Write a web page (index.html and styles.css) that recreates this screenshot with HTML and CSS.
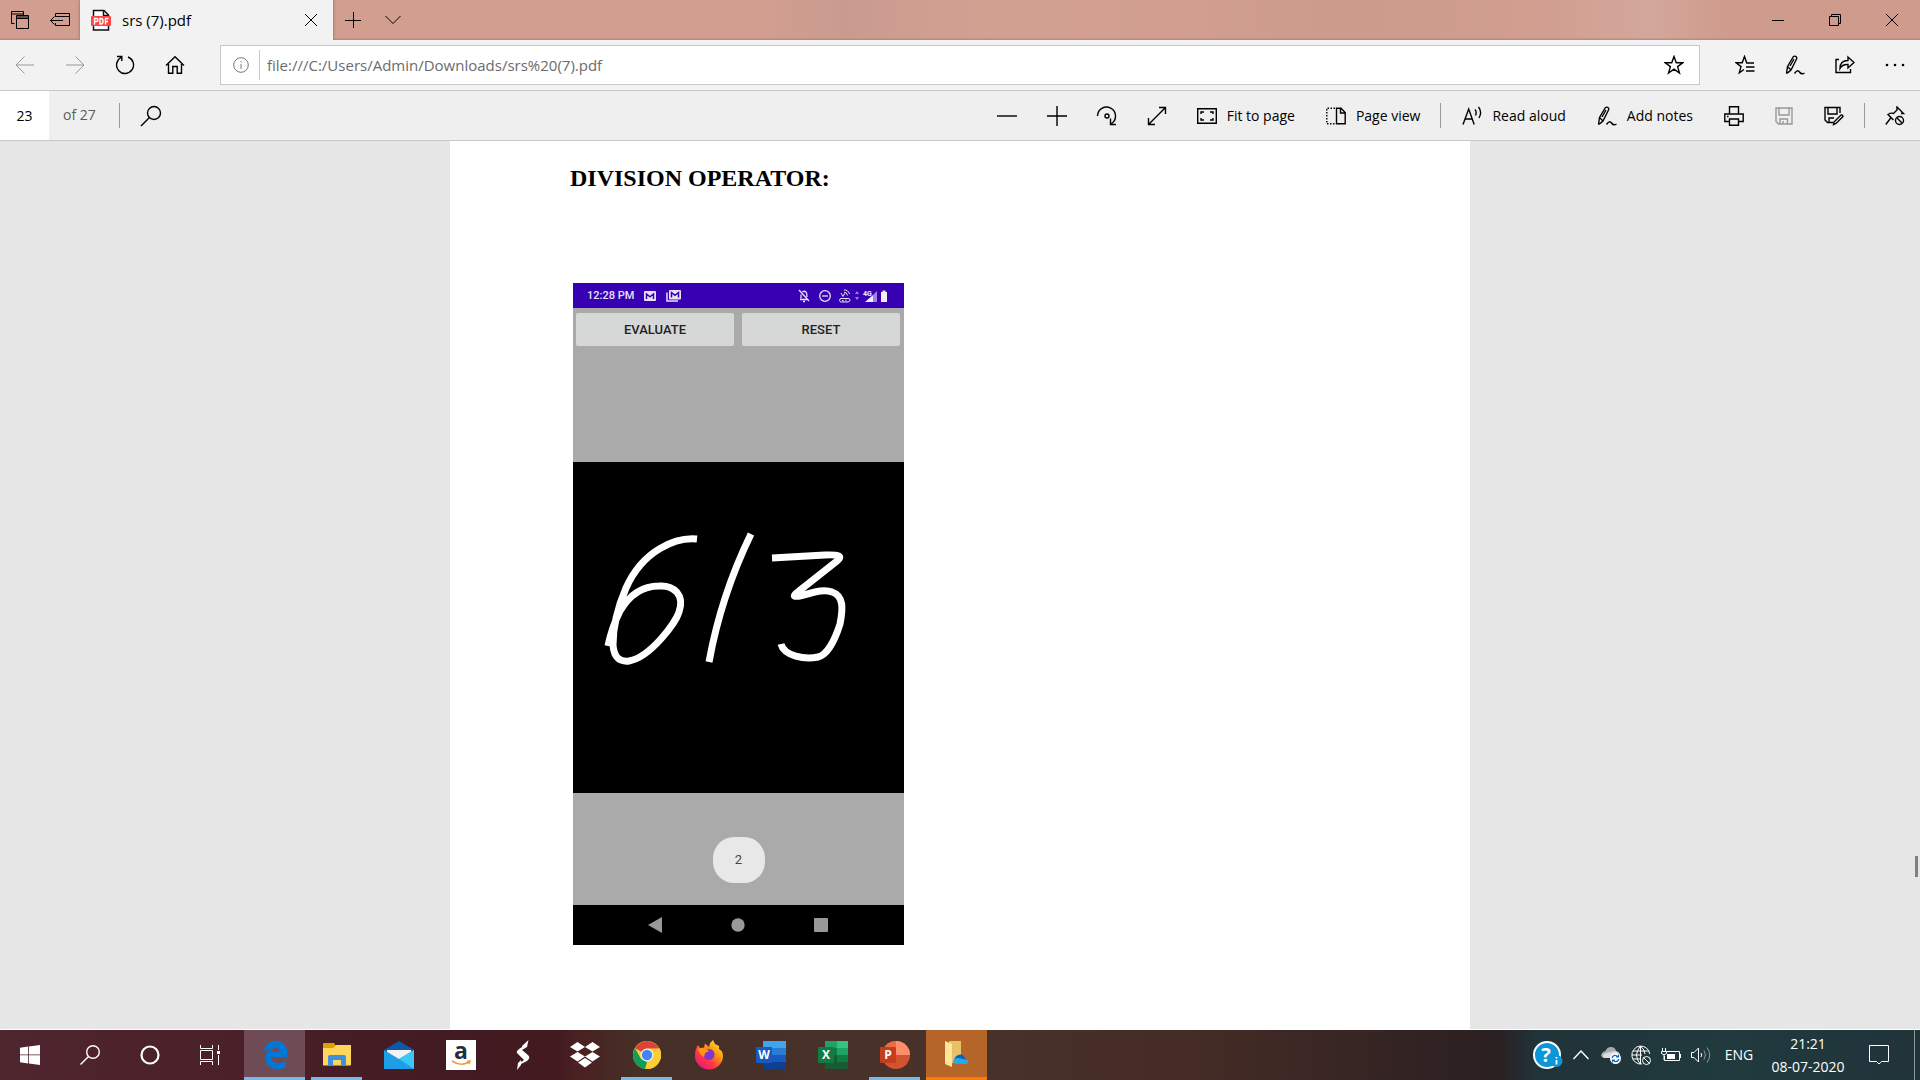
FILE: index.html
```html
<!DOCTYPE html>
<html lang="en">
<head>
<meta charset="utf-8">
<title>srs (7).pdf</title>
<link rel="stylesheet" href="styles.css">
</head>
<body>
<header class="titlebar">
  <button class="tb-btn" aria-label="Tabs set aside"><svg width="20" height="24" viewBox="0 0 20 24" class="ln"><path d="M4.500 15.500H1.500V3.500H13.500V7M1.500 6H13.500M6.500 7.500H18.500V20.500H6.500ZM6.500 10.500H18.500M6.500 9H18.500"/></svg></button>
  <button class="tb-btn" aria-label="Set tabs aside"><svg width="22" height="24" viewBox="0 0 22 24" class="ln"><path d="M6.500 9V5.500H20.500V17.500H6.500V15M6.500 8.500H20.500M14 12.500H1.500M5.500 8.500L1.500 12.500L5.500 16.500"/></svg></button>
  <div class="tab">
    <svg width="20" height="22" viewBox="0 0 20 22"><path d="M2.500 21V1.500H13L17.500 6V21Z" fill="#fff" stroke="#111" stroke-width="1.500"/><path d="M12.500 1V6.500H18" fill="none" stroke="#111" stroke-width="1.500"/><rect y="7" width="20" height="10" rx="1" fill="#f44"/><path d="M3.500 15.500V9.500H5.500Q7 9.500 7 11T5.500 12.500H3.500M9 9.500H10Q12 9.500 12 12.200T10 15H9ZM14.500 15.500V9.500H17.500M14.500 12.500H17" fill="none" stroke="#fff" stroke-width="1.400"/></svg>
    <span class="tab-title">srs (7).pdf</span>
    <button class="tab-close" aria-label="Close tab"><svg width="14" height="14" viewBox="0 0 14 14" class="ln"><path d="M1 1L13 13M13 1L1 13"/></svg></button>
  </div>
  <button class="tb-btn" aria-label="New tab"><svg width="16" height="16" viewBox="0 0 16 16" class="ln"><path d="M8.500 0V16M0 8.500H16"/></svg></button>
  <button class="tb-btn" aria-label="Tab previews"><svg width="16" height="10" viewBox="0 0 16 10" class="ln"><path d="M.5 1L8 8.500L15.500 1"/></svg></button>
  <div class="spacer"></div>
  <button class="win-btn" aria-label="Minimize"><svg width="12" height="12" viewBox="0 0 12 12" class="ln"><path d="M0 6.500H12"/></svg></button>
  <button class="win-btn" aria-label="Restore"><svg width="12" height="12" viewBox="0 0 12 12" class="ln"><path d="M.5 2.500H9.500V11.500H.5ZM2.500 2.500V.5H11.500V9.500H9.500"/></svg></button>
  <button class="win-btn" aria-label="Close"><svg width="12" height="12" viewBox="0 0 12 12" class="ln"><path d="M0 0L12 12M12 0L0 12"/></svg></button>
</header>

<nav class="navbar">
  <button class="icon-btn" aria-label="Back" disabled><svg width="20" height="18" viewBox="0 0 20 18" class="ln dim"><path d="M19 9H1M9.500 .5L1 9L9.500 17.500"/></svg></button>
  <button class="icon-btn" aria-label="Forward" disabled><svg width="20" height="18" viewBox="0 0 20 18" class="ln dim"><path d="M1 9H19M10.500 .5L19 9L10.500 17.500"/></svg></button>
  <button class="icon-btn" aria-label="Refresh"><svg width="20" height="20" viewBox="0 0 20 20" class="ln md"><path d="M13 2A8.500 8.500 0 1 1 6 2.500M2 1.500H6.800V6"/></svg></button>
  <button class="icon-btn" aria-label="Home"><svg width="20" height="20" viewBox="0 0 20 20" class="ln md"><path d="M1 10.500L10 1.800L19 10.500M3.500 9V18.200H7.800V11.500H12.200V18.200H16.500V9"/></svg></button>
  <div class="address">
    <svg width="16" height="16" viewBox="0 0 16 16" class="ln grey"><circle cx="8" cy="8" r="7.300"/><path d="M8 6.800V12M8 4V5.300"/></svg>
    <input class="url" aria-label="Address" value="file:///C:/Users/Admin/Downloads/srs%20(7).pdf">
    <button class="star" aria-label="Add to favorites"><svg width="20" height="20" viewBox="0 0 20 20" class="ln md"><path d="M10 1.500L12.300 7.800H18.800L13.600 11.600L15.500 18L10 14.200L4.500 18L6.400 11.600L1.200 7.800H7.700Z"/></svg></button>
  </div>
  <button class="icon-btn" aria-label="Favorites"><svg width="20" height="20" viewBox="0 0 20 20" class="ln md"><path d="M19 8H11.800L9.500 1.500L7.200 7.800H1.200L6 11.600L4.300 17.800L9 14.500M11 12H19.500M11 16H19.500"/></svg></button>
  <button class="icon-btn" aria-label="Add notes to page"><svg width="20" height="20" viewBox="0 0 20 20" class="ln md"><path d="M1.500 18.500L2.500 11.500L8.500 1.500Q10 .5 11.500 2L11.800 3.500L6 15Q4 17 1.500 18.500M2.500 11.500L5.500 14.500M9 4L5 11M9.500 18.500Q12.500 14 14.500 17T19.500 18"/></svg></button>
  <button class="icon-btn" aria-label="Share"><svg width="20" height="20" viewBox="0 0 20 20" class="ln md"><path d="M4 4.500H1V17.500H15.500V14M5 13.500Q5 5.500 13 5.500V2L19 7.500L13 13V9.500Q7.500 9 5 13.500Z"/></svg></button>
  <button class="icon-btn" aria-label="Settings and more"><svg width="20" height="4" viewBox="0 0 20 4"><circle cx="2" cy="2" r="1.300"/><circle cx="10" cy="2" r="1.300"/><circle cx="18" cy="2" r="1.300"/></svg></button>
</nav>

<div class="toolbar">
  <input class="page-no" id="page" value="23" aria-label="Page number">
  <label class="page-of" for="page">of 27</label>
  <span class="sep"></span>
  <button class="icon-btn find" aria-label="Find"><svg width="22" height="22" viewBox="0 0 22 22" class="ln md"><circle cx="14" cy="8" r="6.500"/><path d="M9.500 12.500L1 21"/></svg></button>
  <div class="spacer"></div>
  <button class="icon-btn" aria-label="Zoom out"><svg width="20" height="20" viewBox="0 0 20 20" class="ln md"><path d="M0 10H20"/></svg></button>
  <button class="icon-btn" aria-label="Zoom in"><svg width="20" height="20" viewBox="0 0 20 20" class="ln md"><path d="M0 10H20M10 0V20"/></svg></button>
  <button class="icon-btn" aria-label="Rotate"><svg width="22" height="22" viewBox="0 0 22 22" class="ln md"><path d="M1.500 11A9 9 0 1 1 15.500 18.500M14.500 13.500V19.500H20"/><circle cx="11" cy="11" r="2"/></svg></button>
  <button class="icon-btn" aria-label="Full screen"><svg width="20" height="20" viewBox="0 0 20 20" class="ln md"><path d="M1.500 18.500L18.500 1.500M12 1.500H18.500V8M1.500 12V18.500H8"/></svg></button>
  <button class="text-btn"><svg width="20" height="16" viewBox="0 0 20 16" class="ln md"><path d="M.7 .7H19.300V15.300H.7ZM4 6V4H7M13 4H16V6M16 10V12H13M7 12H4V10"/></svg>Fit to page</button>
  <button class="text-btn view"><svg width="20" height="18" viewBox="0 0 20 18" class="ln md"><path d="M10.500 1.200H15L19.200 5.500V16.800H10.500ZM14.500 1.200V6H19"/><path stroke-dasharray="1.500 1.500" d="M9 1.200H.8V16.800H9"/></svg>Page view</button>
  <span class="sep"></span>
  <button class="text-btn wide"><svg width="20" height="20" viewBox="0 0 20 20" class="ln md"><path d="M1 18.500L6.700 3L12.200 18.500M3 13H10.200M13 3.500Q15 6 13.500 9.500M16.500 1Q20.500 6 17 12"/></svg>Read aloud</button>
  <button class="text-btn"><svg width="20" height="20" viewBox="0 0 20 20" class="ln md"><path d="M1.500 18.500L2.500 11.500L8.500 1.500Q10 .5 11.500 2L11.800 3.500L6 15Q4 17 1.500 18.500M2.500 11.500L5.500 14.500M9 4L5 11M9.500 18.500Q12.500 14 14.500 17T19.500 18"/></svg>Add notes</button>
  <button class="icon-btn" aria-label="Print"><svg width="20" height="20" viewBox="0 0 20 20" class="ln md"><path d="M5.500 8V.8H14.500V8M5 15.500H.8V8H19.200V15.500H15M5.500 13H14.500V19.200H5.500ZM3 10.500H4.500"/></svg></button>
  <button class="icon-btn" aria-label="Save" disabled><svg width="18" height="18" viewBox="0 0 18 18" class="ln dim md"><path d="M1 1H17V17H3.500L1 14.500ZM4 1V8H14V1M5 17V12H12.500V17M8 14V17"/></svg></button>
  <button class="icon-btn" aria-label="Save as"><svg width="20" height="20" viewBox="0 0 20 20" class="ln md"><path d="M9 16.500H3.500L1 14V1.500H16V7M4 1.500V8H13V1.500M5 16.500V12H10M10 16L17 9Q18.500 8.500 19 10.500L12 17.500L9.500 18.500Z"/></svg></button>
  <span class="sep end"></span>
  <button class="icon-btn" aria-label="Unpin toolbar"><svg width="20" height="20" viewBox="0 0 20 20" class="ln md"><path d="M8.500 14L3 8.500Q6 6.500 8.500 7.500L12 4V1L18.500 7.500H16M5.700 12L.8 18.500"/><circle cx="14.500" cy="14.500" r="4"/><path d="M12 12L17 17"/></svg></button>
</div>

<main class="viewer">
  <article class="page">
    <h1 class="heading">DIVISION OPERATOR:</h1>
    <section class="phone">
      <div class="status">
        <span>12:28 PM</span>
        <svg width="12" height="10" viewBox="0 0 12 10"><rect width="12" height="10" rx="1" fill="#e8e0f8"/><path d="M2.500 8V3L6 5.800L9.500 3V8" fill="none" stroke="#3700b3" stroke-width="1.500"/></svg>
        <svg width="15" height="12" viewBox="0 0 15 12"><path d="M1 2.500V11H12" fill="none" stroke="#e8e0f8" stroke-width="1.500"/><rect x="3" width="12" height="9.500" rx="1" fill="#e8e0f8"/><path d="M5.500 7.500V2.500L9 5.300L12.500 2.500V7.500" fill="none" stroke="#3700b3" stroke-width="1.500"/></svg>
        <span class="spacer"></span>
        <svg width="90" height="16" viewBox="0 0 90 16"><g fill="none" stroke="#e8e0f8" stroke-width="1.300"><path d="M1 2L11 13M2 11.500H9.500M3 10.500V6.500M4.500 4Q6 2.500 8 4Q9 5 9 9M5 13.500H7"/><circle cx="27" cy="8" r="5.300"/><path d="M24 8H30"/><path stroke-width="1" d="M42.500 10.500H50Q52 10.500 52 12T50 14H43.500Q41.500 14 41.500 12.300T43.500 10.500M44.500 12V13H46M48 11.500V13.500M43 5L45 8.500L47 5M46 2Q50 1.500 51.500 6M46 4Q49 4 49.500 7.500"/></g><path fill="#9f86dd" d="M57 6L59 3L61 6ZM57 9H61L59 12ZM75 7L79 3V14H75Z"/><path fill="#f2edfc" d="M67 14L75 7V14ZM83 4H84.500V2.500H87.500V4H89V14H83Z"/><text x="65" y="8" class="net">4G</text></svg>
      </div>
      <div class="actions"><button class="act">EVALUATE</button><button class="act">RESET</button></div>
      <svg class="canvas" viewBox="0 0 331 331" role="img" aria-label="Handwritten 6 / 3"><g fill="none" stroke="#fff" stroke-width="7"><path d="M124 77C103 75 70 88 53 126C44 147 40 168 40 183C41 196 47 200 56 199C78 195 103 160 106 150C112 133 101 123 86 124C70 124 57 132 47 149C40 163 37 174 35 184"/><path d="M178 72C160 109 144 156 136 200"/><path d="M199 96L252 93Q273 92 264 99L226 129Q216 136 227 134C245 129 252 127 259 130C271 134 270 147 267 162C262 178 254 193 245 195C232 198 211 194 208 182" stroke-linejoin="round"/></g></svg>
      <div class="result"><output class="toast">2</output></div>
      <div class="keys"><svg width="14" height="16" viewBox="0 0 14 16"><path d="M0 8L14 0V16Z"/></svg><svg width="14" height="14" viewBox="0 0 14 14"><circle cx="7" cy="7" r="6.700"/></svg><svg width="14" height="14" viewBox="0 0 14 14"><rect width="14" height="14" rx="1"/></svg></div>
    </section>
  </article>
  <span class="thumb"></span>
</main>

<footer class="taskbar">
  <button class="sys" aria-label="Start"><svg width="20" height="20" viewBox="0 0 20 20" fill="#fff"><path d="M0 2.800L8.200 1.500V9.500H0ZM9 1.400L20 0V9.500H9ZM0 10.300H8.200V18.500L0 17.300ZM9 10.300H20V20L9 18.600Z"/></svg></button>
  <button class="sys" aria-label="Search"><svg width="20" height="20" viewBox="0 0 20 20" class="ln wh md"><circle cx="13" cy="7" r="6.300"/><path d="M8.500 11.500L.5 19.500"/></svg></button>
  <button class="sys" aria-label="Cortana"><svg width="20" height="20" viewBox="0 0 20 20"><circle cx="10" cy="10" r="8.500" fill="none" stroke="#fff" stroke-width="2.200"/></svg></button>
  <button class="sys" aria-label="Task view"><svg width="20" height="20" viewBox="0 0 20 20" class="ln wh"><path d="M.5 0V3.500H12.500V0M.5 5.500H12.500V14.500H.5ZM.5 20V16.500H12.500V20M18.500 0V5M18.500 10V20"/><path d="M17 6H20V9H17Z" fill="#fff" stroke="none"/></svg></button>
  <div class="apps">
    <button class="app active run" aria-label="Microsoft Edge"><svg width="26" height="28" viewBox="0 0 26 28"><path fill="#0078d7" d="M1 12C3 4 8 0 14 0C21 0 25.500 5 25.500 12V16H9C9.500 20 12 22 16.500 22C19.500 22 22 21 24 20V26C21.500 27.500 18.500 28 15.500 28C8 28 3.500 23.500 3.500 17C3.500 12.500 6 9 10 7.500C5.500 8 2.500 10 1 12ZM9 11H17.500C17.500 7.500 15.500 6.500 13.500 6.500C11 6.500 9.500 8 9 11Z"/></svg></button>
    <button class="app run" aria-label="File Explorer"><svg width="28" height="24" viewBox="0 0 28 24"><path fill="#dfa100" d="M0 1Q0 0 1 0H11L13 3H27V8H0Z"/><path fill="#ffd65c" d="M0 5H10L13 2H28V21.500Q28 22.500 27 22.500H0Z"/><path fill="#3b91dd" d="M5 23V14Q5 12 7 12H21Q23 12 23 14V23H18V17H10V23Z"/></svg></button>
    <button class="app" aria-label="Mail"><svg width="30" height="28" viewBox="0 0 30 28"><path fill="#0c59a4" d="M0 9L15 0L30 9V18H0Z"/><path fill="#f3f3f3" d="M3 9H27V19H3Z"/><path fill="#1d9ee6" d="M0 9L15 18L30 9V28H0Z"/><path fill="#3bc8f5" d="M30 9V28L15 18Z"/></svg></button>
    <button class="app" aria-label="Amazon"><svg width="30" height="30" viewBox="0 0 30 30"><path fill="#fff" d="M0 0H30V30H0Z"/><text x="15" y="19" class="amz">a</text><path d="M6 21Q15 27 23 22M21 21.500L24 21L23 24" fill="none" stroke="#f79b34" stroke-width="1.600"/></svg></button>
    <button class="app" aria-label="Streamlabs"><svg width="14" height="30" viewBox="0 0 14 30" fill="#fff"><path d="M12.500 0L11 7L6 10V6ZM6 7L3 9Q-1 12 2 14L8 20L5 22V24L11 21Q15 18 12 15L6 10ZM5 20V25L1 30L2 23Z"/></svg></button>
    <button class="app" aria-label="Dropbox"><svg width="30" height="26" viewBox="0 0 30 26" fill="#fff"><path d="M7.500 0L15 5L7.500 9.500L0 5ZM22.500 0L30 5L22.500 9.500L15 5ZM7.500 10L15 14.500L7.500 19.500L0 14.500ZM22.500 10L30 14.500L22.500 19.500L15 14.500ZM15 16L22 20.500L15 25.500L8 20.500Z"/></svg></button>
    <button class="app run" aria-label="Google Chrome"><svg width="28" height="28" viewBox="0 0 28 28"><circle cx="14" cy="14" r="14" fill="#fc3"/><path fill="#db4437" d="M14 14L1.900 7A14 14 0 0 1 26.100 7Z"/><path fill="#0f9d58" d="M1.900 7L8 18L14 21L12 27.900A14 14 0 0 1 1.900 7Z"/><path fill="#fc3" d="M14 7.500H26.500A14 14 0 0 1 13.500 28L20 17Z"/><circle cx="14" cy="14" r="6.500" fill="#f1f1f1"/><circle cx="14" cy="14" r="5.200" fill="#4285f4"/></svg></button>
    <button class="app" aria-label="Firefox"><svg width="28" height="30" viewBox="0 0 28 30"><defs><linearGradient id="ff" x1="1" y1="0" x2=".2" y2="1"><stop offset="0" stop-color="#fff44f"/><stop offset=".4" stop-color="#ff980e"/><stop offset=".7" stop-color="#ff3647"/><stop offset="1" stop-color="#e31587"/></linearGradient></defs><path fill="url(#ff)" d="M3 5L5 8L9 7.500L10 3.500L14 7L15 3L18 0L20 4L24 6V9Q28 11 28 16A14 13.500 0 0 1 0 16Q0 9 3 5Z"/><circle cx="14" cy="14.500" r="5.500" fill="#8135d0"/><path fill="#ff980e" d="M3 9Q9 6 14 11L10 13L9 17Q4 14 3 9Z"/></svg></button>
    <button class="app" aria-label="Word"><svg width="30" height="28" viewBox="0 0 30 28"><path fill="#41a5ee" d="M7 0H30V7H7Z"/><path fill="#2b7cd3" d="M7 7H30V14H7Z"/><path fill="#185abd" d="M7 14H30V21H7Z"/><path fill="#103f91" d="M7 21H30V28H7Z"/><rect y="6" width="16" height="16" rx="1" fill="#185abd"/><text x="8" y="18" class="off">W</text></svg></button>
    <button class="app" aria-label="Excel"><svg width="30" height="28" viewBox="0 0 30 28"><path fill="#21a366" d="M7 0H19V7H7Z"/><path fill="#33c481" d="M19 0H30V7H19Z"/><path fill="#107c41" d="M7 7H19V14H7ZM19 14H30V21H19Z"/><path fill="#21a366" d="M19 7H30V14H19Z"/><path fill="#185c37" d="M7 14H19V21H30V28H7Z"/><rect y="6" width="16" height="16" rx="1" fill="#107c41"/><text x="8" y="18" class="off">X</text></svg></button>
    <button class="app run" aria-label="PowerPoint"><svg width="30" height="28" viewBox="0 0 30 28"><circle cx="16" cy="14" r="14" fill="#d35230"/><path fill="#ed6c47" d="M16 14H2A14 14 0 0 1 16 0Z"/><path fill="#ff8f6b" d="M16 0A14 14 0 0 1 30 14H16Z"/><rect y="6" width="16" height="16" rx="1" fill="#c43e1c"/><text x="8" y="18" class="off">P</text></svg></button>
    <button class="app alert" aria-label="OneDrive folder"><svg width="24" height="26" viewBox="0 0 24 26"><path fill="#e8c165" d="M4 0H16V22H4Z"/><path fill="#ffe69c" d="M0 0L7 3V26L0 23Z"/><path fill="#0364b8" d="M9 20Q9 16 13 14Q18 12 20 17L22 20Z"/><path fill="#28a8ea" d="M8 20Q9 17 13 17L23 19Q25 22 21 23H11Q8 23 8 20Z"/></svg></button>
  </div>
  <div class="spacer"></div>
  <button class="help" aria-label="Help"><svg width="30" height="28" viewBox="0 0 30 28"><circle cx="14" cy="14" r="13" fill="#0a96d7" stroke="#fff" stroke-width="2"/><text x="13" y="21" class="q">?</text><circle cx="23.500" cy="20" r="6" fill="#0a96d7"/><path d="M23.500 19V23.500M23.500 16V17.500" stroke="#fff" stroke-width="1.800"/></svg></button>
  <div class="tray">
    <button class="tray-btn" aria-label="Show hidden icons"><svg width="16" height="10" viewBox="0 0 16 10" class="ln wh md"><path d="M.5 9L8 1L15.500 9"/></svg></button>
    <button class="tray-btn" aria-label="OneDrive"><svg width="20" height="18" viewBox="0 0 20 18"><path fill="#aaa" d="M3 12Q-1 11 .5 8T4.500 5Q6 1 10 1T15 5Q19 6 19 10T14 12Z"/><path fill="#ddd" d="M3 12Q0 9 5 7L14 5Q19 6 19 10L14 12Z"/><circle cx="14.500" cy="12.500" r="5.500" fill="#fff"/><path d="M11 12Q12 9 15 9.500L17.500 11M18 13Q17 16 14 15.500L11.500 14M17.500 8.500V11H15M11.500 16.500V14H14" fill="none" stroke="#1565c0" stroke-width="1.200"/></svg></button>
    <button class="tray-btn" aria-label="Network"><svg width="20" height="20" viewBox="0 0 20 20" class="ln wh"><path d="M11 19A9 9 0 1 1 18.800 9M9 19Q5.500 14 5.500 10T9.500 1Q14 5 14 9M9.500 1V19M2 6H18M1 10H11M2 14H10"/><circle cx="15.500" cy="15.500" r="4"/><path d="M12.500 12.500L18.500 18.500"/></svg></button>
    <button class="tray-btn" aria-label="Battery"><svg width="20" height="14" viewBox="0 0 20 14" class="ln wh"><path d="M5.500 3.500H18.500V12.500H3.500V8M19.500 6V10M1.500 0V3M4.500 0V3M.5 3.500H5.500V5.500Q3 8 .5 5.500ZM3 7V12"/><path d="M6 6H14V11H6Z" fill="#fff" stroke="none"/></svg></button>
    <button class="tray-btn" aria-label="Volume"><svg width="20" height="18" viewBox="0 0 20 18" class="ln wh"><path d="M.5 6.500H3L7.500 2V16L3 11.500H.5ZM10 7Q11.500 9 10 11"/><path d="M13 4.500Q16 9 13 13.500M16 1.500Q21.500 9 16 16.500" stroke="#8a989b"/></svg></button>
  </div>
  <button class="lang">ENG</button>
  <button class="clock"><time>21:21</time><time>08-07-2020</time></button>
  <button class="notif" aria-label="Notifications"><svg width="20" height="20" viewBox="0 0 20 20" class="ln wh"><path d="M.5 .5H19.500V16.500H12.500L10 19L7.500 16.500H.5Z"/></svg></button>
  <span class="peek"></span>
</footer>
</body>
</html>
```
FILE: styles.css
```css
* { box-sizing: border-box; }
body {
  margin: 0;
  min-height: 100vh;
  display: flex;
  flex-direction: column;
  background: #e6e6e6;
  color: #000;
  font: 14px/20px "Open Sans", "Noto Sans", sans-serif;
}
button, input { font: inherit; color: inherit; border: 0; background: none; padding: 0; margin: 0; }
button { display: flex; align-items: center; justify-content: center; flex: none; }
svg { display: block; flex: none; }
.spacer { flex: 1; }
.ln { fill: none; stroke: #000; stroke-width: 1; }
.md { stroke-width: 1.4; }
.dim { stroke: #999; }
.grey { stroke: #767676; }
.wh { stroke: #fff; }

.titlebar {
  height: 40px;
  display: flex;
  background: linear-gradient(90deg, #d19e90 0 40%, #c99b8f 44%, #d3a192 52%, #d19e90 62%, #cc9b8b 70%, #d19e90 80%, #d3a79c 86%, #cf9b8c 90%, #cf9b8c);
  box-shadow: inset 0 -2px 2px -1px #b3836f;
}
.tb-btn { width: 40px; }
.tab {
  width: 253px;
  display: flex;
  align-items: center;
  padding-left: 11px;
  background: #f2f2f2;
  box-shadow: 0 0 3px #8d6559;
  clip-path: inset(0 -4px);
}
.tab-title { flex: 1; padding-left: 11px; font-size: 15px; }
.tab-close { width: 44px; height: 40px; }
.win-btn { width: 57px; }

.navbar { height: 51px; display: flex; background: #f2f2f2; border-bottom: 1px solid #c8c8c8; }
.icon-btn { width: 50px; }
.address {
  flex: 1;
  display: flex;
  align-items: center;
  margin: 5px 20px 5px 20px;
  padding-left: 12px;
  background: #fff;
  border: 1px solid #c8c8c8;
}
.url {
  flex: 1;
  height: 30px;
  margin-left: 10px;
  padding-left: 7px;
  border-left: 1px solid #c8c8c8;
  color: #6b6b6b;
  font-size: 15px;
}
.star { width: 50px; height: 38px; }

.toolbar { height: 50px; display: flex; align-items: stretch; background: #efefef; border-bottom: 1px solid #c8c8c8; }
.page-no { width: 49px; background: #fff; text-align: center; }
.page-of { padding: 14px 23px 0 14px; color: #5c5c5c; }
.sep { width: 1px; height: 25px; align-self: center; background: #999; }
.text-btn { gap: 10px; padding: 0 16px 0 15px; }
.view { padding-right: 20px; }
.wide { padding-left: 21px; }
.find { margin-left: 6px; }
.end { margin: 0 5px; }

.viewer { flex: 1; position: relative; border-bottom: 1px solid #fff; display: flex; justify-content: center; }
.page { width: 1020px; background: #fff; padding: 23px 120px 0; }
.heading { margin: 0; font: bold 24px/28px "Liberation Serif", serif; }
.thumb { position: absolute; right: 2px; top: 715px; width: 3px; height: 21px; background: #808080; }

.phone { width: 331px; margin: 91px 0 0 3px; background: #aaa; font-family: Roboto, sans-serif; }
.status {
  height: 25px;
  display: flex;
  align-items: center;
  gap: 10px;
  padding: 0 16px 0 14px;
  background: #3700b3;
  color: #e8e0f8;
  font-size: 11px;
  font-weight: 500;
}
.net { font: bold 7px Roboto, sans-serif; fill: #f2edfc; }
.actions { height: 154px; display: flex; align-items: flex-start; gap: 8px; padding: 5px 4px 5px 3px; }
.act { flex: 1; height: 33px; background: #d6d7d7; border-radius: 2px; font-size: 13px; font-weight: 500; color: #222; }
.canvas { width: 100%; background: #000; }
.result { height: 112px; display: flex; justify-content: center; padding-top: 44px; }
.toast {
  width: 52px;
  height: 46px;
  border-radius: 21px;
  background: #e8e8e8;
  color: #444;
  text-align: center;
  font-size: 13px;
  line-height: 46px;
}
.keys { height: 40px; display: flex; align-items: center; justify-content: space-between; padding: 0 76px 0 75px; background: #000; fill: #999; }

.taskbar {
  height: 50px;
  display: flex;
  color: #fff;
  background: linear-gradient(90deg, #50262e 0, #4b2029 12%, #421a21 25%, #421a20 29%, #4a2020 30%, #452f26 33%, #483229 50%, #452c26 62%, #2b2022 78%, #203338 80%, #203a3e 90%, #20343a);
}
.sys { width: 60px; }
.apps { display: flex; gap: 1px; margin-left: 4px; }
.app { width: 61px; position: relative; }
.active { background: #6f4c55; }
.run::after { content: ""; position: absolute; left: 5px; right: 5px; bottom: 0; height: 3px; background: #76b9ed; }
.active::after { left: 0; right: 0; }
.alert { background: #b56528; border-bottom: 3px solid #ff7800; }
.amz { font: bold 23px "Open Sans", sans-serif; fill: #232f3e; text-anchor: middle; }
.off { font: bold 12px "Open Sans", sans-serif; fill: #fff; text-anchor: middle; }
.q { font: bold 20px "Open Sans", sans-serif; fill: #fff; text-anchor: middle; }
.help { width: 36px; }
.tray { display: flex; }
.tray-btn { width: 30px; }
.lang { width: 46px; }
.clock { width: 92px; flex-direction: column; line-height: 23px; }
.notif { width: 50px; }
.peek { width: 6px; margin-left: 10px; border-left: 1px solid #8a989b; }
```
